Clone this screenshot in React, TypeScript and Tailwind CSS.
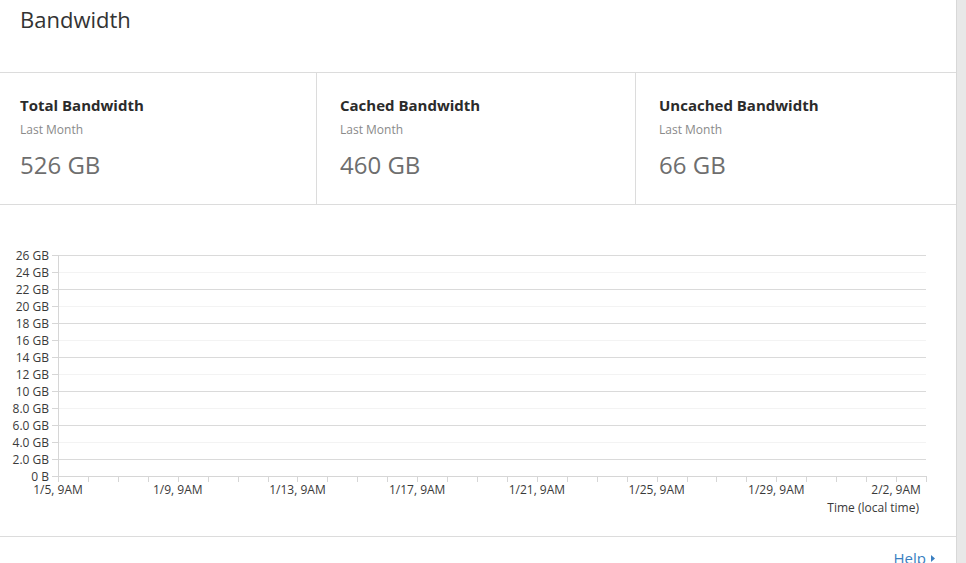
import React from 'react';

const stats = [
  { title: 'Total Bandwidth', sub: 'Last Month', value: '526 GB', pad: 'pl-5' },
  { title: 'Cached Bandwidth', sub: 'Last Month', value: '460 GB', pad: 'pl-[23px] border-l border-[#dcdcdc]' },
  { title: 'Uncached Bandwidth', sub: 'Last Month', value: '66 GB', pad: 'pl-[23px] border-l border-[#dcdcdc]' },
];

const yLabels = ['0 B', '2.0 GB', '4.0 GB', '6.0 GB', '8.0 GB', '10 GB', '12 GB', '14 GB', '16 GB', '18 GB', '20 GB', '22 GB', '24 GB', '26 GB'];
const xLabels = ['1/5, 9AM', '1/9, 9AM', '1/13, 9AM', '1/17, 9AM', '1/21, 9AM', '1/25, 9AM', '1/29, 9AM', '2/2, 9AM'];

// chart coords are relative to the top of the chart section (page y = 205)
const X0 = 58;
const X1 = 926;
const Y0 = 271; // page y 476
const STEP_Y = 17;
const STEP_X = (X1 - X0) / 29;

const Chart = () => (
  <svg width="956" height="331" className="block" style={{ fontFamily: '"Open Sans", sans-serif' }}>
    {yLabels.map((label, i) => {
      const y = Y0 - i * STEP_Y + 0.5;
      const major = i % 2 === 1 || i === 13;
      return (
        <g key={label}>
          {i > 0 && (
            <line x1={X0} x2={X1} y1={y} y2={y} stroke={major ? '#dadada' : '#f3f3f3'} strokeWidth={1} />
          )}
          <line x1={52} x2={X0} y1={y} y2={y} stroke="#d6d6d6" strokeWidth={1} />
          <text x={49} y={y + 4} textAnchor="end" fontSize={12} fill="#3a3a3a">
            {label}
          </text>
        </g>
      );
    })}
    <line x1={X0 + 0.5} x2={X0 + 0.5} y1={Y0 - 13 * STEP_Y} y2={Y0 + 6} stroke="#d6d6d6" strokeWidth={1} />
    <line x1={X0} x2={X1} y1={Y0 + 0.5} y2={Y0 + 0.5} stroke="#d6d6d6" strokeWidth={1} />
    {Array.from({ length: 30 }).map((_, i) => {
      const x = Math.round(X0 + i * STEP_X) + 0.5;
      return <line key={i} x1={x} x2={x} y1={Y0} y2={Y0 + 6} stroke="#d6d6d6" strokeWidth={1} />;
    })}
    {xLabels.map((label, i) => (
      <text key={label} x={X0 + i * 4 * STEP_X} y={289} textAnchor="middle" fontSize={12} fill="#3a3a3a">
        {label}
      </text>
    ))}
    <text x={919} y={307} textAnchor="end" fontSize={12} fill="#3a3a3a">
      Time (local time)
    </text>
  </svg>
);

const App = () => {
  return (
    <div className="flex h-[563px] overflow-hidden bg-white text-[#333]" style={{ fontFamily: '"Open Sans", sans-serif' }}>
      <div className="w-[956px] shrink-0">
        <div className="h-[73px] border-b border-[#dcdcdc] pl-5 pt-[5px]">
          <h1 className="text-[22px] leading-[28px] text-[#333]">Bandwidth</h1>
        </div>

        <div className="grid grid-cols-[316px_319px_1fr] border-b border-[#dcdcdc]">
          {stats.map((s) => (
            <div key={s.title} className={`${s.pad} h-[131px] pt-[22px]`}>
              <div className="text-[15px] leading-[20px] font-bold text-[#2b2b2b]">{s.title}</div>
              <div className="mt-[7px] text-[12px] leading-[16px] text-[#8a8a8a]">{s.sub}</div>
              <div className="mt-[11px] text-[24px] leading-[32px] text-[#6e6e6e]">{s.value}</div>
            </div>
          ))}
        </div>

        <div className="border-b border-[#dcdcdc]">
          <Chart />
        </div>

        <div className="flex justify-end pr-[21px] pt-[11px]">
          <a className="flex items-center gap-[5px] text-[15px] leading-[20px] text-[#3a7fc1]">
            Help
            <svg width="4" height="7" viewBox="0 0 4 7">
              <path d="M0 0 L4 3.5 L0 7 Z" fill="#3a7fc1" />
            </svg>
          </a>
        </div>
      </div>
      <div className="h-full w-[10px] border-l border-[#d8d8d8] bg-[#e8e8e8]" />
    </div>
  );
};

export default App;
